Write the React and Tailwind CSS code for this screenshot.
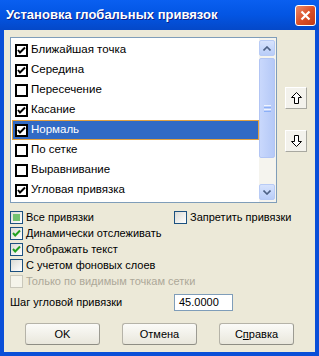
import React from 'react';

const items = [
  { label: 'Ближайшая точка', checked: true },
  { label: 'Середина', checked: true },
  { label: 'Пересечение', checked: false },
  { label: 'Касание', checked: true },
  { label: 'Нормаль', checked: true, selected: true },
  { label: 'По сетке', checked: false },
  { label: 'Выравнивание', checked: false },
  { label: 'Угловая привязка', checked: true },
];

function ListCheck({ checked }) {
  return (
    <span className="w-[13px] h-[13px] border-2 border-black bg-white flex items-center justify-center shrink-0">
      {checked && (
        <svg width="9" height="9" viewBox="0 0 9 9">
          <path d="M1 4 L3 6.5 L8 1.5" stroke="black" strokeWidth="2" fill="none" />
        </svg>
      )}
    </span>
  );
}

function XpCheck({ state, disabled }) {
  return (
    <span
      className={`w-[13px] h-[13px] border flex items-center justify-center shrink-0 ${
        disabled ? 'border-[#CAC8BB] bg-[#F5F4EA]' : 'border-[#1C5180] bg-gradient-to-br from-[#DCDBD5] to-white'
      }`}
    >
      {state === 'checked' && (
        <svg width="9" height="9" viewBox="0 0 9 9">
          <path d="M1 4 L3.2 6.5 L8 1.5" stroke="#21A121" strokeWidth="2" fill="none" />
        </svg>
      )}
      {state === 'mixed' && <span className="w-[7px] h-[7px] bg-[#73C270]" />}
    </span>
  );
}

function ArrowBtn({ down }) {
  return (
    <div className="w-[22px] h-[22px] bg-[#F3F2EC] border border-t-white border-l-white border-r-[#A8A8A0] border-b-[#A8A8A0] flex items-center justify-center">
      <svg width="11" height="12" viewBox="0 0 11 12" style={down ? { transform: 'rotate(180deg)' } : undefined}>
        <path d="M5.5 0.5 L10.5 5.5 L7.5 5.5 L7.5 11.5 L3.5 11.5 L3.5 5.5 L0.5 5.5 Z" fill="white" stroke="black" strokeWidth="1" />
      </svg>
    </div>
  );
}

function Btn({ children }) {
  return (
    <div className="w-[75px] h-[22px] rounded-[3px] border border-[#B5B3A8] border-b-[#8E8D84] border-r-[#9C9B92] bg-gradient-to-b from-[#FBFBF8] to-[#E9E7DC] flex items-center justify-center text-[11px] text-black">
      {children}
    </div>
  );
}

export default function App() {
  return (
    <div
      className="w-[319px] h-[356px] bg-[#0A4FD8] flex flex-col overflow-hidden"
      style={{ fontFamily: '"Liberation Sans", Arial, sans-serif' }}
    >
      {/* title bar */}
      <div className="h-[30px] shrink-0 bg-gradient-to-b from-[#0A5FF0] via-[#0355E3] to-[#0448C8] flex items-center pl-[6px] pr-[3px]">
        <span className="text-white font-bold text-[13px] [text-shadow:1px_1px_0_#0A1F8A]">
          Установка глобальных привязок
        </span>
        <div className="ml-auto w-[21px] h-[21px] rounded-[3px] border border-white bg-gradient-to-br from-[#E98A6A] via-[#DB5028] to-[#C13A14] flex items-center justify-center">
          <svg width="11" height="11" viewBox="0 0 11 11">
            <path d="M1.5 1.5 L9.5 9.5 M9.5 1.5 L1.5 9.5" stroke="white" strokeWidth="2.2" />
          </svg>
        </div>
      </div>

      {/* body */}
      <div className="flex-1 mx-[4px] mb-[4px] bg-[#ECE9D8] pt-[7px] pl-[6px] text-[11px] text-black">
        <div className="flex">
          <div className="w-[267px] h-[166px] border border-[#7F9DB9] bg-white flex">
            <div className="flex-1 flex flex-col pt-[2px] pl-[1px]">
              {items.map((it) => (
                <div
                  key={it.label}
                  className={`h-[20px] flex items-center gap-[3px] pl-[2px] ${
                    it.selected ? 'bg-[#316AC5] text-white border border-[#E0A040]' : 'border border-transparent'
                  }`}
                >
                  <ListCheck checked={it.checked} />
                  <span className="text-[11.5px]">{it.label}</span>
                </div>
              ))}
            </div>
            {/* scrollbar */}
            <div className="w-[17px] bg-[#F5F4EE] flex flex-col py-[2px] pr-[1px]">
              <div className="h-[16px] rounded-[2px] border border-[#B8CBF5] bg-gradient-to-b from-[#D7E3FD] to-[#B9CDF8] flex items-center justify-center">
                <svg width="8" height="5" viewBox="0 0 8 5">
                  <path d="M0.5 4.5 L4 1 L7.5 4.5" stroke="#4D6185" strokeWidth="1.6" fill="none" />
                </svg>
              </div>
              <div className="mt-[2px] h-[100px] rounded-[2px] border border-[#B2C5F4] bg-gradient-to-r from-[#C9D8FC] to-[#B5C9F7] flex flex-col items-center justify-center gap-[1px]">
                <span className="w-[7px] h-[1px] bg-[#EEF4FE]" />
                <span className="w-[7px] h-[1px] bg-[#8CB0F8]" />
                <span className="w-[7px] h-[1px] bg-[#EEF4FE]" />
                <span className="w-[7px] h-[1px] bg-[#8CB0F8]" />
              </div>
              <div className="flex-1" />
              <div className="h-[16px] rounded-[2px] border border-[#B8CBF5] bg-gradient-to-b from-[#D7E3FD] to-[#B9CDF8] flex items-center justify-center">
                <svg width="8" height="5" viewBox="0 0 8 5">
                  <path d="M0.5 0.5 L4 4 L7.5 0.5" stroke="#4D6185" strokeWidth="1.6" fill="none" />
                </svg>
              </div>
            </div>
          </div>
          <div className="ml-[8px] pt-[50px] flex flex-col gap-[21px]">
            <ArrowBtn />
            <ArrowBtn down />
          </div>
        </div>

        {/* options */}
        <div className="mt-[6px] flex flex-col">
          <div className="h-[16px] flex items-center">
            <div className="w-[164px] flex items-center gap-[3px]">
              <XpCheck state="mixed" />
              <span>Все привязки</span>
            </div>
            <div className="flex items-center gap-[3px]">
              <XpCheck />
              <span>Запретить привязки</span>
            </div>
          </div>
          <div className="h-[16px] flex items-center gap-[3px]">
            <XpCheck state="checked" />
            <span>Динамически отслеживать</span>
          </div>
          <div className="h-[16px] flex items-center gap-[3px]">
            <XpCheck state="checked" />
            <span>Отображать текст</span>
          </div>
          <div className="h-[16px] flex items-center gap-[3px]">
            <XpCheck />
            <span>С учетом фоновых слоев</span>
          </div>
          <div className="h-[16px] flex items-center gap-[3px]">
            <XpCheck disabled />
            <span className="text-[#ACA899]">Только по видимым точкам сетки</span>
          </div>
        </div>

        <div className="mt-[5px] flex items-center">
          <span className="w-[164px]">Шаг угловой привязки</span>
          <div className="w-[59px] h-[17px] border border-[#7F9DB9] bg-white flex items-center pl-[4px]">
            45.0000
          </div>
        </div>

        <div className="mt-[12px] pl-[15px] flex gap-[22px]">
          <Btn>OK</Btn>
          <Btn>Отмена</Btn>
          <Btn>
            <span>
              С<span className="underline">п</span>равка
            </span>
          </Btn>
        </div>
      </div>
    </div>
  );
}
